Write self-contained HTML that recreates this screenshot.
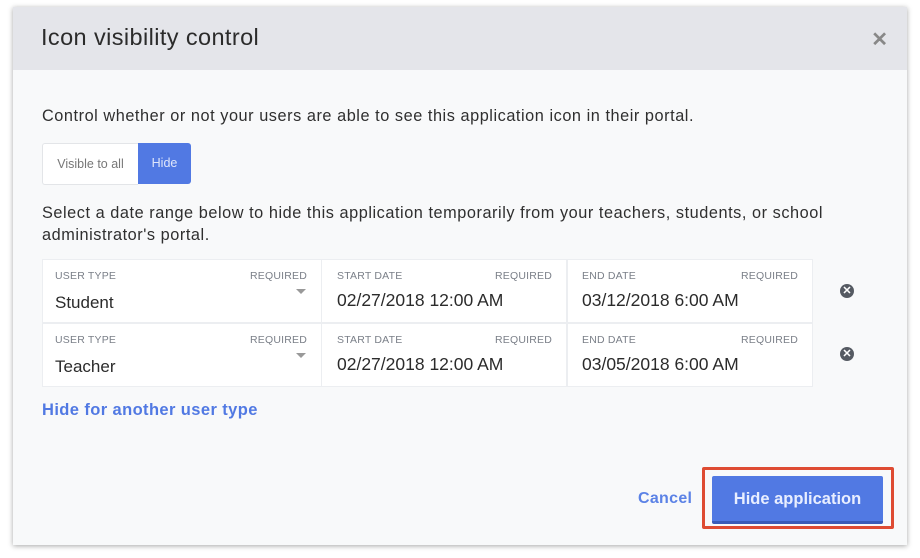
<!DOCTYPE html>
<html><head><style>
body{margin:0;width:920px;height:558px;background:#fff;font-family:"Liberation Sans",sans-serif;position:relative;overflow:hidden}
.dlg{position:absolute;left:13px;top:7px;width:894px;height:538px;background:#f8f9fa;box-shadow:0 1px 5px rgba(0,0,0,.35)}
.hdr{height:63px;background:#e4e5ea;position:relative}
.hdr h1{position:absolute;left:28px;top:17px;margin:0;font-weight:normal;font-size:23.5px;letter-spacing:.4px;color:#2b2b2b}
.x{position:absolute;right:19px;top:20px;font-size:20px;color:#888;font-weight:bold}
.t{position:absolute;font-size:16.3px;letter-spacing:.55px;color:#2f2f2f;line-height:22px}
.cell{position:absolute;background:#fff;height:62px}
.lab{position:absolute;top:10px;font-size:10.5px;color:#7a7f88;letter-spacing:.2px}
.val{position:absolute;top:30px;font-size:17.5px;color:#2b2b2b}
.del{position:absolute;width:14px;height:14px;border-radius:50%;background:#555a62;color:#fff;font-size:11px;line-height:14px;text-align:center;font-weight:bold}
</style></head><body>
<div class="dlg">
<div class="hdr"><h1>Icon visibility control</h1><div class="x">✕</div></div>
</div>
<div class="t" style="left:42px;top:105px">Control whether or not your users are able to see this application icon in their portal.</div>
<div style="position:absolute;left:42px;top:143px;width:95px;height:40px;background:#fff;border:1px solid #e3e5e8;border-right:none;border-radius:3px 0 0 3px;font-size:12.5px;color:#777;line-height:40px;text-align:center">Visible to all</div>
<div style="position:absolute;left:138px;top:143px;width:53px;height:41px;background:#5179e3;border-radius:0 3px 3px 0;font-size:12.5px;color:#dfe6fb;line-height:41px;text-align:center">Hide</div>
<div class="t" style="left:42px;top:202px;width:810px">Select a date range below to hide this application temporarily from your teachers, students, or school administrator's portal.</div>
<div style="position:absolute;left:42px;top:259px;width:771px;height:128px;background:#eceef1"></div>

<div class="cell" style="left:43px;top:260px;width:278px"><span class="lab" style="left:12px">USER TYPE</span><span class="lab" style="right:14px">REQUIRED</span><span style="position:absolute;right:15px;top:29px;border:5px solid transparent;border-top:5px solid #999"></span><span class="val" style="left:12px;top:33px;font-size:17px">Student</span></div>
<div class="cell" style="left:322px;top:260px;width:244px"><span class="lab" style="left:15px">START DATE</span><span class="lab" style="right:14px">REQUIRED</span><span class="val" style="left:15px">02/27/2018 12:00 AM</span></div>
<div class="cell" style="left:568px;top:260px;width:244px"><span class="lab" style="left:14px">END DATE</span><span class="lab" style="right:14px">REQUIRED</span><span class="val" style="left:14px">03/12/2018 6:00 AM</span></div>

<div class="cell" style="left:43px;top:324px;width:278px"><span class="lab" style="left:12px">USER TYPE</span><span class="lab" style="right:14px">REQUIRED</span><span style="position:absolute;right:15px;top:29px;border:5px solid transparent;border-top:5px solid #999"></span><span class="val" style="left:12px;top:33px;font-size:17px">Teacher</span></div>
<div class="cell" style="left:322px;top:324px;width:244px"><span class="lab" style="left:15px">START DATE</span><span class="lab" style="right:14px">REQUIRED</span><span class="val" style="left:15px">02/27/2018 12:00 AM</span></div>
<div class="cell" style="left:568px;top:324px;width:244px"><span class="lab" style="left:14px">END DATE</span><span class="lab" style="right:14px">REQUIRED</span><span class="val" style="left:14px">03/05/2018 6:00 AM</span></div>

<div class="del" style="left:840px;top:284px">✕</div>
<div class="del" style="left:840px;top:347px">✕</div>

<div style="position:absolute;left:42px;top:401px;font-size:16.5px;letter-spacing:.4px;font-weight:bold;color:#5179e3">Hide for another user type</div>
<div style="position:absolute;left:638px;top:490px;font-size:16px;letter-spacing:.3px;font-weight:bold;color:#5b82e6">Cancel</div>
<div style="position:absolute;left:702px;top:467px;width:186px;height:56px;border:3px solid #de4b32;border-radius:2px"></div>
<div style="position:absolute;left:712px;top:476px;width:171px;height:45px;background:#5179e3;border-bottom:3px solid #3b5cb8;border-radius:2px;color:#e8eeff;font-size:16.5px;font-weight:bold;text-align:center;line-height:47px">Hide application</div>
</body></html>
